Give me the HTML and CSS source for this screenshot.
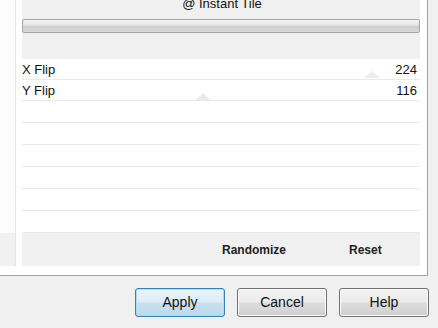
FILE: index.html
```html
<!DOCTYPE html>
<html lang="en">
  <head>
    <meta charset="utf-8">
    <title>Instant Tile</title>
    <link rel="stylesheet" href="styles.css">
  </head>
  <body>
    <div class="dialog">
      <div class="frame">
        <div class="side">
          <div class="side-fill"></div>
          <div class="side-bar"></div>
        </div>
        <div class="panel">
          <div class="panel-head">
            <div class="title">@ Instant Tile</div>
            <div class="slider"></div>
          </div>
          <div class="rows">
            <div class="row row-short">
              <span>X Flip</span><span>224</span>
              <i class="thumb thumb-x"></i>
            </div>
            <div class="row row-short">
              <span>Y Flip</span><span>116</span>
              <i class="thumb thumb-y"></i>
            </div>
            <div class="row"></div>
            <div class="row"></div>
            <div class="row"></div>
            <div class="row"></div>
            <div class="row"></div>
            <div class="row"></div>
          </div>
          <div class="actions">
            <span class="action">Randomize</span>
            <span class="action">Reset</span>
          </div>
        </div>
      </div>
      <div class="buttons">
        <button class="btn btn-default">Apply</button>
        <button class="btn">Cancel</button>
        <button class="btn">Help</button>
      </div>
    </div>
  </body>
</html>
```

FILE: styles.css
```css
html, body {
  margin: 0;
  padding: 0;
  background: #f0f0f0;
  font-family: "Liberation Sans", Arial, sans-serif;
  font-size: 13px;
  color: #111;
}
.dialog {
  width: 438px;
  height: 328px;
  overflow: hidden;
}
.frame {
  display: flex;
  width: 427px;
  height: 266px;
  padding-bottom: 9px;
  background: #fff;
  border-right: solid 1px #a0a0a0;
  border-bottom: solid 1px #a0a0a0;
}
.side {
  display: flex;
  flex-direction: column;
  width: 15px;
  margin-right: 6px;
  border-right: solid 1px #e6e6e6;
}
.side-fill {
  height: 233px;
  background: #fcfcfc;
}
.side-bar {
  height: 33px;
  background: #f0f0f0;
}
.panel {
  display: flex;
  flex-direction: column;
  width: 398px;
}
.panel-head {
  height: 59px;
  background: #f0f0f0;
}
.title {
  margin-top: -3px;
  line-height: 13px;
  text-align: center;
  padding-left: 2px;
}
.slider {
  height: 12px;
  margin-top: 9px;
  border: solid 1px #a6a6a6;
  border-radius: 2px;
  background: linear-gradient(#f4f4f4, #e2e2e2 45%, #cfcfcf 55%, #d8d8d8);
}
.rows {
  display: flex;
  flex-direction: column;
}
.row {
  position: relative;
  display: flex;
  justify-content: space-between;
  align-items: center;
  box-sizing: border-box;
  height: 22px;
  padding-right: 3px;
  border-bottom: solid 1px #e9e9e9;
  background: #fff;
}
.row-short {
  height: 21px;
}
.thumb {
  position: absolute;
  width: 0;
  height: 0;
  border-left: solid 8px transparent;
  border-right: solid 8px transparent;
  border-bottom: solid 7px #ececec;
}
.thumb-x {
  left: 342px;
  bottom: 1px;
}
.thumb-y {
  left: 173px;
  bottom: 0;
}
.actions {
  display: grid;
  grid-template-columns: 200px 127px auto;
  align-items: center;
  height: 33px;
  background: #f0f0f0;
  font-size: 12px;
  font-weight: bold;
  color: #222;
}
.action:first-child {
  grid-column: 2;
}
.buttons {
  display: flex;
  justify-content: flex-end;
  gap: 12px;
  margin-top: 12px;
  padding-right: 9px;
}
.btn {
  box-sizing: border-box;
  width: 90px;
  height: 29px;
  padding: 0 0 1px 0;
  border: solid 1px #707070;
  border-radius: 3px;
  background: linear-gradient(#f2f2f2, #ebebeb 48%, #dddddd 52%, #cfcfcf);
  box-shadow: inset 0 0 0 1px #fbfbfb;
  font-family: "Liberation Sans", Arial, sans-serif;
  font-size: 14px;
  color: #111;
}
.btn-default {
  border-color: #3c7fb1;
  background: linear-gradient(#eaf4fa, #dcecf6 48%, #c9e1f0 52%, #bcd8ea);
  box-shadow: inset 0 0 0 1px #a8dcf6;
}
```
